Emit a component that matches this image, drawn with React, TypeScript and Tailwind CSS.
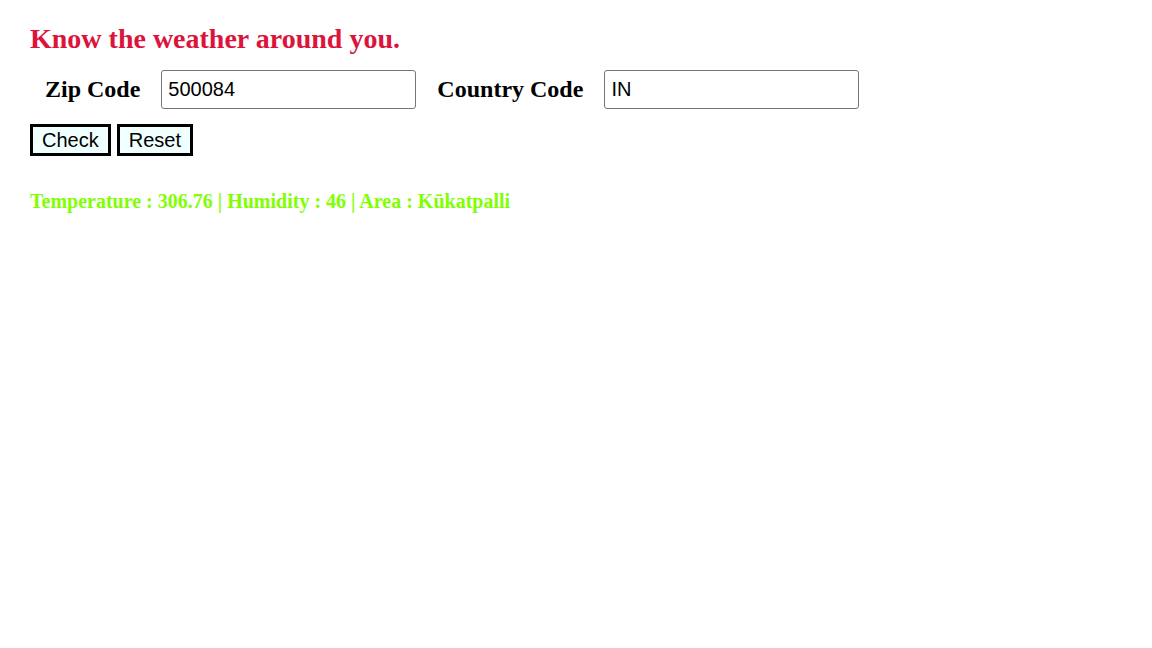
import React, { useState } from "react";

export default function App() {
  const [zip, setZip] = useState("500084");
  const [country, setCountry] = useState("IN");

  return (
    <div className="min-h-screen bg-white px-[30px] pt-[22px] font-['Liberation_Serif',serif] text-black">
      <h2 className="text-[28px] font-bold leading-[34px] text-[#dc143c]">Know the weather around you.</h2>

      <div className="mt-[14px] flex items-center">
        <label className="ml-[15px] -translate-y-px text-[24px] font-bold">Zip Code</label>
        <input
          value={zip}
          onChange={(e) => setZip(e.target.value)}
          className="ml-[21px] h-[39px] w-[255px] rounded-[3px] border border-[#767676] px-[6px] font-['Liberation_Sans',sans-serif] text-[20px] outline-none"
        />
        <label className="ml-[21px] -translate-y-px text-[24px] font-bold">Country Code</label>
        <input
          value={country}
          onChange={(e) => setCountry(e.target.value)}
          className="ml-[21px] h-[39px] w-[255px] rounded-[3px] border border-[#767676] px-[6px] font-['Liberation_Sans',sans-serif] text-[20px] outline-none"
        />
      </div>

      <div className="mt-[15px] flex gap-[6px]">
        <button className="h-[32px] border-[3px] border-black bg-[#f0ffff] px-[9px] font-['Liberation_Sans',sans-serif] text-[20px] leading-none">
          Check
        </button>
        <button className="h-[32px] border-[3px] border-black bg-[#f0ffff] px-[9px] font-['Liberation_Sans',sans-serif] text-[20px] leading-none">
          Reset
        </button>
      </div>

      <p className="mt-[30px] text-[20px] font-bold text-[#7fff00]">
        Temperature : 306.76 | Humidity : 46 | Area : Kūkatpalli
      </p>
    </div>
  );
}
